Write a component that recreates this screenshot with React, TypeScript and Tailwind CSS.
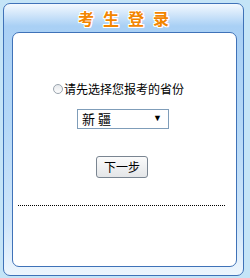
const App = () => {
  return (
    <div className="w-[250px] h-[278px] bg-[#c4e4f7] pt-[3px] pl-[3px] overflow-hidden" style={{ fontFamily: '"Liberation Sans", "Noto Sans CJK SC", sans-serif' }}>
      {/* outer panel */}
      <div className="w-[241px] h-[273px] border border-[#3f72b8] rounded-[7px] bg-[linear-gradient(to_bottom,#f4f9fe_0px,#a9d0f5_22px,#b4d8f7_120px,#cfe6fa_220px,#eef6fd_273px)] flex flex-col">
        {/* title */}
        <div className="h-[28px] flex items-center justify-center">
          <span className="text-[16px] font-bold tracking-[9px] pl-[9px] text-[#f28500] [text-shadow:1px_0_0_#fff,-1px_0_0_#fff,0_1px_0_#fff,0_-1px_0_#fff,1px_1px_0_#fff,-1px_-1px_0_#fff,1px_-1px_0_#fff,-1px_1px_0_#fff]" style={{ fontFamily: '"Noto Sans CJK SC", sans-serif' }}>
            考生登录
          </span>
        </div>
        {/* inner white box */}
        <div className="ml-[8px] w-[225px] h-[235px] bg-white border border-[#3f72b8] rounded-[7px] pt-[48px] flex flex-col items-center">
          <div className="flex items-center h-[16px] text-[12px] text-black pl-[2px] mr-[14px]">
            <span className="w-[10px] h-[10px] rounded-full border border-[#9aa4ae] bg-[linear-gradient(to_bottom,#e6e9ec,#fdfdfd)] mr-[1px]" />
            <span style={{ fontFamily: '"Noto Sans CJK SC", sans-serif' }}>请先选择您报考的省份</span>
          </div>
          <div className="mt-[12px] w-[92px] h-[20px] border border-[#7f9db9] bg-white flex items-center justify-between pl-[4px] pr-[6px] text-[13px] text-black mr-[3px]">
            <span style={{ fontFamily: '"Noto Sans CJK SC", sans-serif' }}>新&nbsp;疆</span>
            <span className="text-[9px]">▼</span>
          </div>
          <button className="mt-[27px] w-[52px] h-[22px] rounded-[3px] border border-[#7a8591] bg-[linear-gradient(to_bottom,#fbfbfb,#e4e6e8)] text-[12px] text-black flex items-center justify-center mr-[5px]" style={{ fontFamily: '"Noto Sans CJK SC", sans-serif' }}>
            下一步
          </button>
          <div className="mt-[27px] self-start ml-[5px] w-[207px] border-t border-dotted border-black" />
        </div>
      </div>
    </div>
  );
};

export default App;
